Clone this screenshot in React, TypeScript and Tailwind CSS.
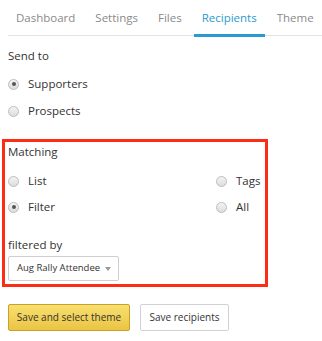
import { useState } from 'react';

const tabs = ['Dashboard', 'Settings', 'Files', 'Recipients', 'Theme'];

function Radio({ checked, label }: { checked?: boolean; label: string }) {
    return (
        <label className="flex items-center h-[20px] gap-[9px]">
            <span className="w-[11px] h-[11px] rounded-full border border-[#bdbdbd] bg-gradient-to-b from-[#f4f4f4] to-[#dcdcdc] flex items-center justify-center shrink-0">
                {checked && <span className="w-[4px] h-[4px] rounded-full bg-[#555]" />}
            </span>
            <span>{label}</span>
        </label>
    );
}

export default function App() {
    const [active] = useState('Recipients');

    return (
        <div className="w-[322px] h-[341px] bg-white text-[#333] text-[11.5px] font-['Open_Sans',sans-serif] overflow-hidden">
            <div className="ml-2 flex h-[36px] border-b border-[#e4e4e4]">
                {tabs.map(t => (
                    <div
                        key={t}
                        className={`relative px-2 mr-[4px] flex items-center ${t === active ? 'text-[#2a9bd0]' : 'text-[#8a8a8a]'}`}
                    >
                        {t}
                        {t === active && <span className="absolute left-0 right-0 bottom-[-2px] h-[3px] bg-[#2a9bd0]" />}
                    </div>
                ))}
            </div>

            <div className="px-2">
                <div className="mt-[10px] h-[20px] flex items-center">Send to</div>
                <div className="mt-[8px]"><Radio checked label="Supporters" /></div>
                <div className="mt-[7px]"><Radio label="Prospects" /></div>
            </div>

            <div className="mt-[18px] ml-[2px] w-[266px] border-[3px] border-[#fd2c14] px-[3px] pb-[3px]">
                <div className="h-[20px] flex items-center">Matching</div>
                <div className="mt-[9px] grid grid-cols-[208px_1fr] gap-y-[6px]">
                    <Radio label="List" />
                    <Radio label="Tags" />
                    <Radio checked label="Filter" />
                    <Radio label="All" />
                </div>
                <div className="mt-[18px] h-[20px] flex items-center">filtered by</div>
                <div className="mt-[1px] w-[111px] h-[25px] border border-[#cfcfcf] rounded-[2px] flex items-center justify-between pl-[8px] pr-[7px] text-[9.5px] whitespace-nowrap">
                    <span>Aug Rally Attendee</span>
                    <span className="w-0 h-0 border-l-[3px] border-r-[3px] border-t-[4px] border-l-transparent border-r-transparent border-t-[#999]" />
                </div>
            </div>

            <div className="mt-[17px] ml-2 flex gap-[10px]">
                <button className="h-[27px] w-[122px] rounded-[2px] border border-[#c9a12a] bg-gradient-to-b from-[#f8e06e] to-[#ebc442] text-[#333] text-[10px] whitespace-nowrap">
                    Save and select theme
                </button>
                <button className="h-[27px] w-[89px] rounded-[2px] border border-[#d2d2d2] bg-white text-[#333] text-[10px] whitespace-nowrap">
                    Save recipients
                </button>
            </div>
        </div>
    );
}
